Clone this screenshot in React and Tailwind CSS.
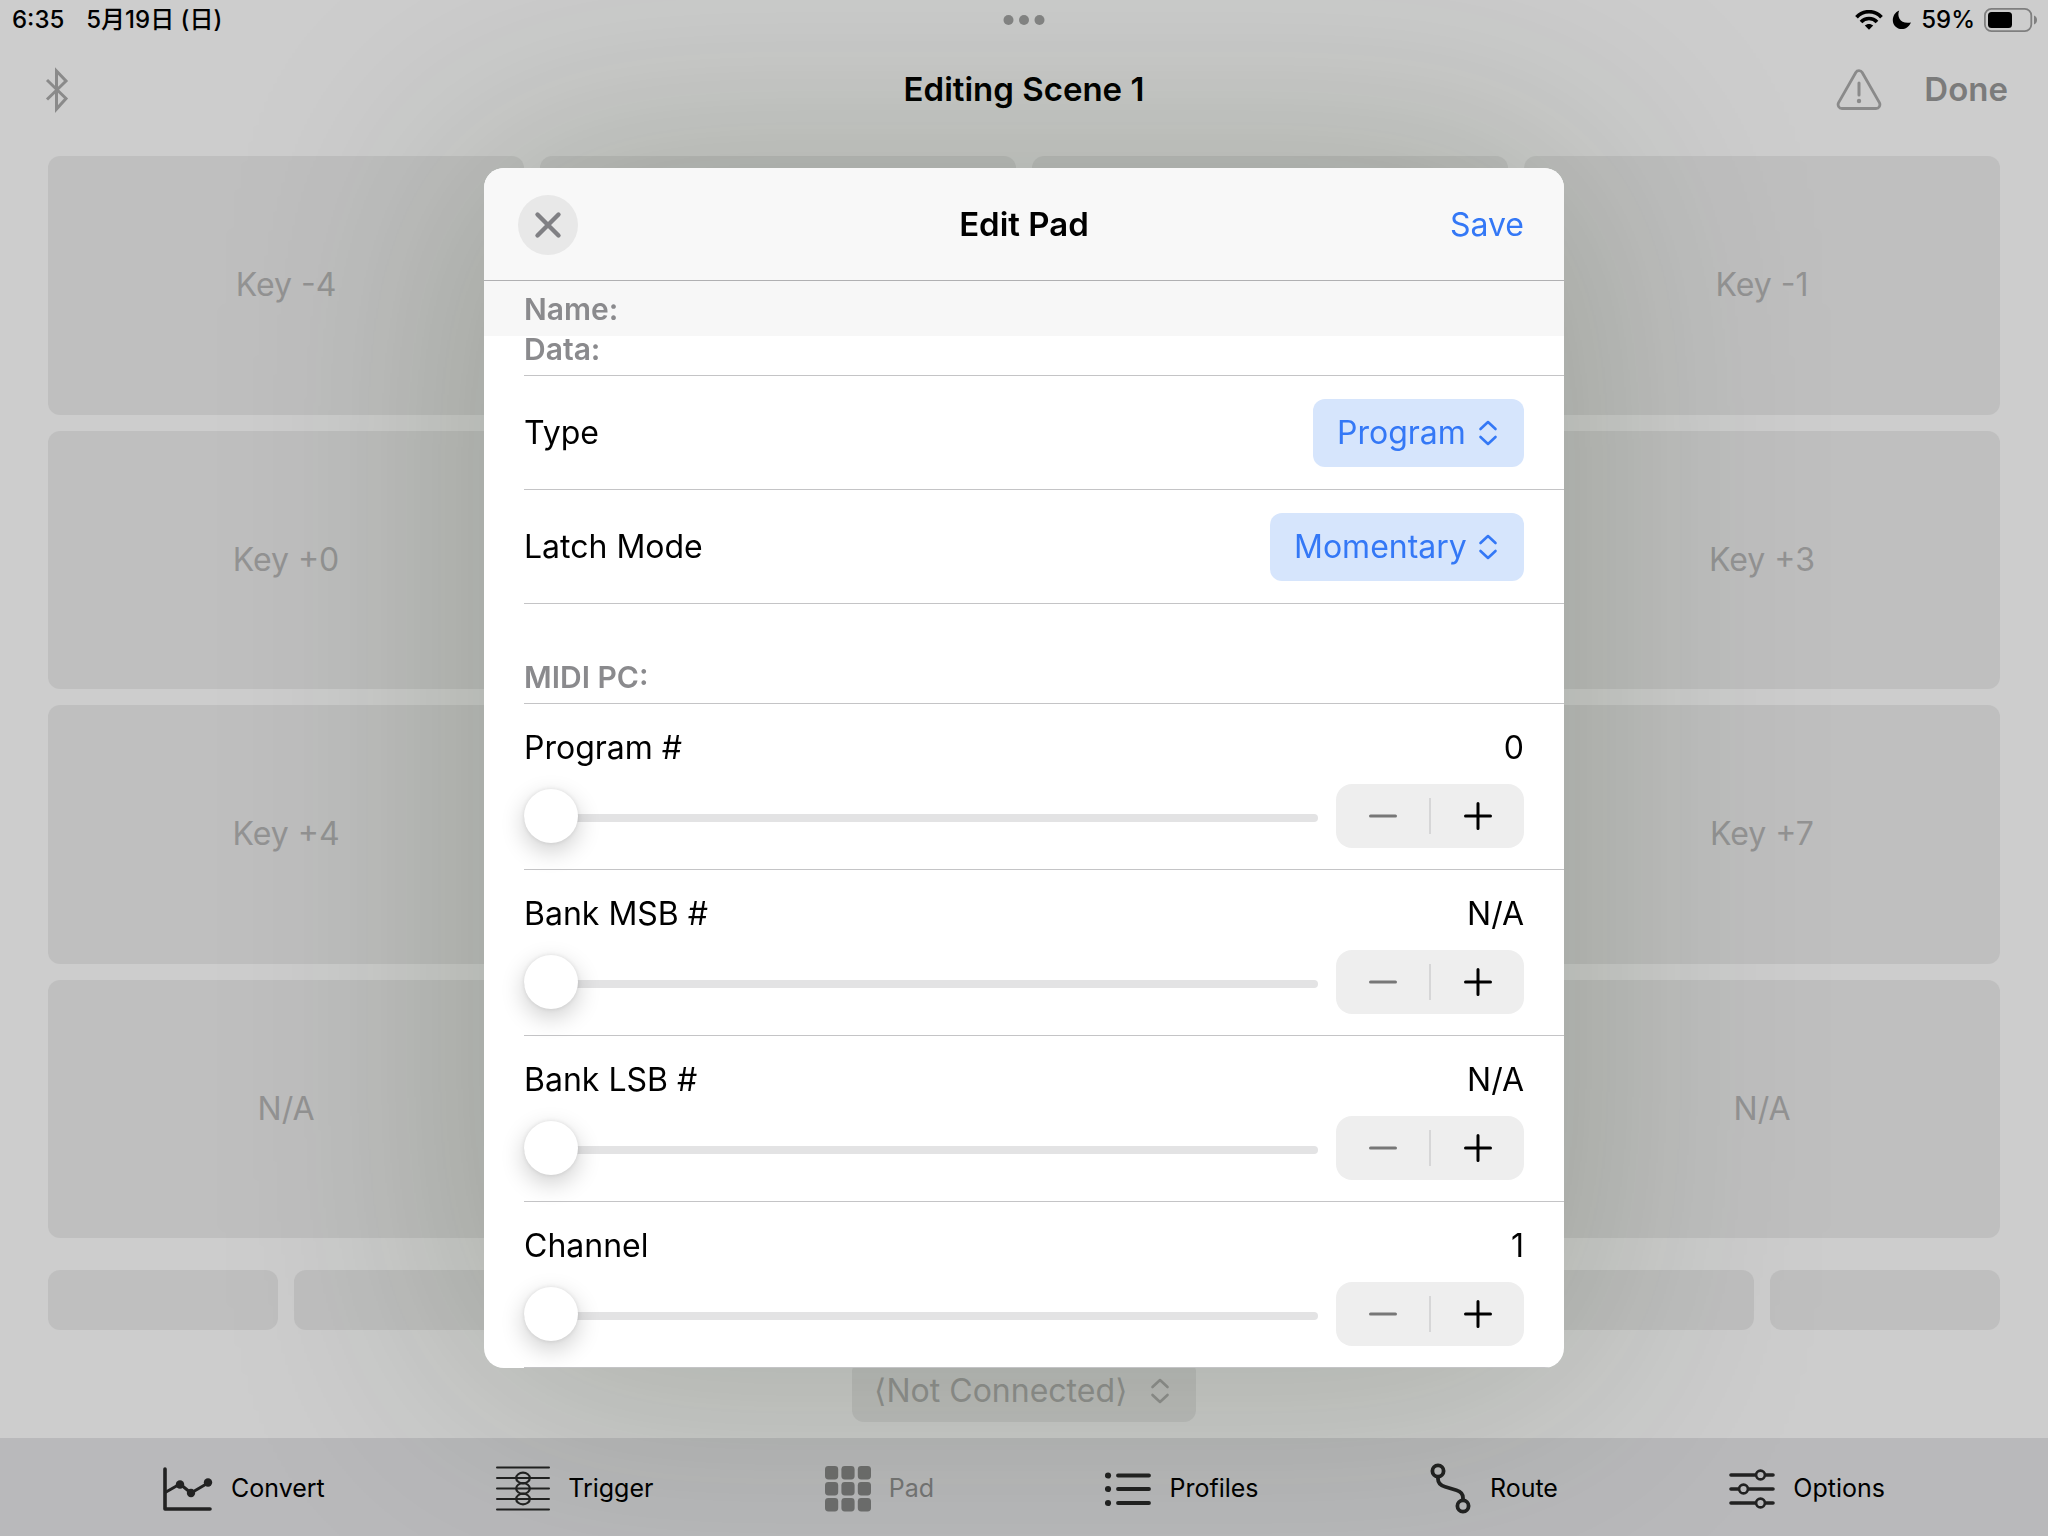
import React, { useState } from "react";

const padNames = [
  "Key -4", "", "", "Key -1",
  "Key +0", "", "", "Key +3",
  "Key +4", "", "", "Key +7",
  "N/A", "", "", "N/A",
];

const UpDown = () => (
  <svg className="pointer-events-none h-7 w-5 shrink-0" viewBox="0 0 20 28" fill="none" stroke="currentColor" strokeWidth="2.6" strokeLinecap="round" strokeLinejoin="round">
    <path d="M2.5 10 L10 3 L17.5 10 M2.5 18 L10 25 L17.5 18" />
  </svg>
);

const StatusBar = () => (
  <div className="grid h-10 grid-cols-3 items-center px-[10px] text-2xl font-medium text-black">
    <div className="flex gap-[22px] pl-0.5">
      <span>6:35</span>
      <span>5月19日 (日)</span>
    </div>
    <svg className="h-3 w-[42px] justify-self-center" viewBox="0 0 42 12" fill="#858585">
      <circle cx="5.5" cy="6" r="5" />
      <circle cx="21" cy="6" r="5" />
      <circle cx="36.5" cy="6" r="5" />
    </svg>
    <div className="flex items-center justify-self-end gap-[9px]">
      <svg className="h-5 w-7" viewBox="0 0 28 20" fill="none" stroke="#000" strokeWidth="3.6">
        <path d="M1.5 7.2 C8 -0.2 20 -0.2 26.5 7.2" />
        <path d="M6 12 C10.2 7.4 17.8 7.4 22 12" />
        <path d="M14 19.8 L9.8 15.6 C12 13.5 16 13.5 18.2 15.6 Z" fill="#000" stroke="none" />
      </svg>
      <svg className="h-5 w-5" viewBox="0 0 20 20">
        <path d="M7.2 0.4 C4.5 6.5 8.5 14.6 19 12.4 C16.8 17 13.6 19 9.8 19 C4.8 19 0.8 15.2 0.8 10.2 C0.8 5.8 3.2 2 7.2 0.4 Z" />
      </svg>
      <span>59%</span>
      <svg className="h-6 w-[54px]" viewBox="0 0 54 24">
        <rect x="0.9" y="0.9" width="46.4" height="22.2" rx="6.5" fill="none" stroke="#7f7f7f" strokeWidth="1.8" />
        <rect x="4" y="4" width="24" height="16" rx="3.5" />
        <path d="M50 7.5 C54 9 54 15 50 16.5 Z" fill="#7f7f7f" />
      </svg>
    </div>
  </div>
);

const Header = () => (
  <header className="grid h-[100px] grid-cols-3 items-center px-10 text-[33px] font-semibold">
    <button aria-label="Bluetooth" className="justify-self-start pl-1">
      <svg className="h-12 w-7" viewBox="0 0 28 48" fill="none" stroke="#8a8a8a" strokeWidth="3">
        <path d="M3 14 L22 32.5 L12.5 43 V5 L22 15 L3 33.5" />
      </svg>
    </button>
    <h1 className="whitespace-nowrap justify-self-center">Editing Scene 1</h1>
    <div className="flex items-center gap-[42px] justify-self-end text-[#7b7b7b]">
      <button aria-label="Warnings">
        <svg className="h-[42px] w-[46px]" viewBox="0 0 46 42" fill="none" stroke="#8a8a8a" strokeWidth="2.8" strokeLinecap="round">
          <path d="M19.8 3.5 L2.6 33.6 C1.2 36.4 3 39.5 6 39.5 H40 C43 39.5 44.8 36.4 43.4 33.6 L26.2 3.5 C24.8 1.1 21.2 1.1 19.8 3.5 Z" />
          <path d="M23 14 V26" strokeWidth="3" />
          <circle cx="23" cy="32" r="2.2" fill="#8a8a8a" stroke="none" />
        </svg>
      </button>
      <button>Done</button>
    </div>
  </header>
);

const ConvertIcon = () => (
  <svg className="h-[54px] w-[50px]" viewBox="0 0 50 54" fill="none" stroke="#222" strokeWidth="3.6" strokeLinecap="round" strokeLinejoin="round">
    <path d="M2 7 V47 H47" />
    <path d="M3 30 L17 22 L28 31 L45 21" strokeWidth="3" />
    <g fill="#222" stroke="none">
      <circle cx="17" cy="22.5" r="4.2" />
      <circle cx="28" cy="31" r="4.2" />
      <circle cx="45" cy="20.5" r="4.2" />
    </g>
  </svg>
);

const TriggerIcon = () => (
  <svg className="h-[54px] w-[54px]" viewBox="0 0 54 54" fill="none" stroke="#222" strokeWidth="2" strokeLinecap="round">
    <path d="M1 5.5 H53 M1 16 H53 M1 26.5 H53 M1 37 H53 M1 47.5 H53" />
    <ellipse cx="27" cy="16" rx="6.8" ry="5.3" strokeWidth="2.2" />
    <ellipse cx="27" cy="26.5" rx="6.8" ry="5.3" strokeWidth="2.2" />
    <ellipse cx="27" cy="37" rx="6.8" ry="5.3" strokeWidth="2.2" />
  </svg>
);

const PadIcon = () => (
  <svg className="h-[54px] w-[46px]" viewBox="0 0 46 54" fill="#6e6e6e">
    {[4, 20, 36].map((y) =>
      [0, 16.4, 32.8].map((x) => (
        <rect key={`${x}-${y}`} x={x} y={y} width="13.2" height="13.4" rx="3.4" />
      ))
    )}
  </svg>
);

const ProfilesIcon = () => (
  <svg className="h-[54px] w-[46px]" viewBox="0 0 46 54" fill="#222" stroke="#222" strokeWidth="3.8" strokeLinecap="round">
    <path d="M13 13.5 H44 M13 27 H44 M13 41 H44" />
    <g stroke="none">
      <circle cx="3" cy="13.5" r="3.1" />
      <circle cx="3" cy="27" r="3.1" />
      <circle cx="3" cy="41" r="3.1" />
    </g>
  </svg>
);

const RouteIcon = () => (
  <svg className="h-[54px] w-[42px]" viewBox="0 0 42 54" fill="none" stroke="#222" strokeWidth="3.8">
    <circle cx="8" cy="9" r="5.6" />
    <circle cx="33" cy="44" r="5.6" />
    <path d="M8 15 V17 C8 21 11 23.5 15 24.8 L26.5 28.3 C30.5 29.5 33 32 33 36 V38" />
  </svg>
);

const OptionsIcon = () => (
  <svg className="h-[54px] w-[46px]" viewBox="0 0 46 54" fill="none" stroke="#222" strokeWidth="3.6" strokeLinecap="round">
    <path d="M2 13 H26 M37 13 H44 M2 27 H9 M20 27 H44 M2 41 H26 M37 41 H44" />
    <g strokeWidth="2.6">
      <circle cx="31.5" cy="13" r="4.4" />
      <circle cx="14.5" cy="27" r="4.4" />
      <circle cx="31.5" cy="41" r="4.4" />
    </g>
  </svg>
);

const tabs = [
  { label: "Convert", Icon: ConvertIcon },
  { label: "Trigger", Icon: TriggerIcon },
  { label: "Pad", Icon: PadIcon, active: true },
  { label: "Profiles", Icon: ProfilesIcon },
  { label: "Route", Icon: RouteIcon },
  { label: "Options", Icon: OptionsIcon },
];

const TabBar = () => (
  <nav className="flex h-[98px] items-center justify-between bg-[#b9b9bb] px-[163px] pt-1 text-[25px]">
    {tabs.map(({ label, Icon, active }) => (
      <button
        key={label}
        className={active ? "flex items-center gap-[18px] text-[#757575]" : "flex items-center gap-[18px] text-black"}
      >
        <Icon />
        {label}
      </button>
    ))}
  </nav>
);

const SelectRow = ({ id, label, options, width }) => (
  <div className="flex h-[114px] items-center justify-between border-b border-[#c4c4c6] pr-10">
    <label htmlFor={id}>{label}</label>
    <div className={`${width} flex h-[68px] items-center rounded-xl bg-[#d6e5fc] pl-6 pr-[26px] text-[#3478f6]`}>
      <select id={id} className="min-w-0 flex-1 appearance-none bg-transparent outline-none">
        {options.map((o) => (
          <option key={o}>{o}</option>
        ))}
      </select>
      <UpDown />
    </div>
  </div>
);

const SliderRow = ({ id, label, min, max, format }) => {
  const [value, setValue] = useState(min);

  return (
    <div className="flex h-[166px] flex-col border-b border-[#c4c4c6] pr-10 pt-5">
      <div className="flex h-12 items-center justify-between">
        <label htmlFor={id}>{label}</label>
        <output htmlFor={id}>{format ? format(value) : value}</output>
      </div>
      <div className="mt-3 flex items-center gap-[18px]">
        <input
          id={id}
          type="range"
          min={min}
          max={max}
          value={value}
          onChange={(e) => setValue(Number(e.target.value))}
          className="mt-1 h-2 min-w-0 flex-1 appearance-none rounded-full bg-[#e3e3e4] outline-none [&::-webkit-slider-thumb]:size-[54px] [&::-webkit-slider-thumb]:-translate-y-0.5 [&::-webkit-slider-thumb]:appearance-none [&::-webkit-slider-thumb]:rounded-full [&::-webkit-slider-thumb]:bg-white [&::-webkit-slider-thumb]:shadow-[0_8px_24px_rgba(0,0,0,0.2),0_0_4px_rgba(0,0,0,0.1)]"
        />
        <div className="flex h-16 w-[188px] items-center rounded-2xl bg-[#eeeeee]">
          <button
            aria-label={`Decrease ${label}`}
            disabled={value <= min}
            onClick={() => setValue(value - 1)}
            className="flex h-full flex-1 items-center justify-center text-black disabled:text-[#777]"
          >
            <svg className="size-7" viewBox="0 0 28 28" stroke="currentColor" strokeWidth="3" strokeLinecap="round">
              <path d="M1.5 14 H26.5" />
            </svg>
          </button>
          <span className="h-9 w-0.5 bg-[#d6d6d7]" />
          <button
            aria-label={`Increase ${label}`}
            disabled={value >= max}
            onClick={() => setValue(value + 1)}
            className="flex h-full flex-1 items-center justify-center text-black disabled:text-[#777]"
          >
            <svg className="size-7" viewBox="0 0 28 28" stroke="currentColor" strokeWidth="3" strokeLinecap="round">
              <path d="M1.5 14 H26.5 M14 1.5 V26.5" />
            </svg>
          </button>
        </div>
      </div>
    </div>
  );
};

const bankFormat = (v) => (v === 0 ? "N/A" : v - 1);

const EditPadDialog = () => (
  <div
    role="dialog"
    aria-labelledby="dialog-title"
    className="w-full max-w-[1080px] rounded-[20px] bg-white shadow-[0_0_280px_10px_rgba(24,44,8,0.22)]"
  >
    <div className="overflow-hidden rounded-[20px]">
      <div className="grid h-[113px] grid-cols-3 items-center border-b border-[#b0b0b2] bg-[#f8f8f8] px-[34px] pt-0.5 text-[32px]">
        <button aria-label="Close" className="flex size-[60px] items-center justify-center rounded-full bg-[#e8e8e8]">
          <svg className="size-7" viewBox="0 0 28 28" stroke="#808084" strokeWidth="4.4" strokeLinecap="round">
            <path d="M3.5 3.5 L24.5 24.5 M24.5 3.5 L3.5 24.5" />
          </svg>
        </button>
        <h2 id="dialog-title" className="justify-self-center text-[33px] font-semibold">Edit Pad</h2>
        <button className="justify-self-end pr-1.5 text-[#3478f6]">Save</button>
      </div>
      <h3 className="flex h-[55px] items-center bg-[#f7f7f7] pl-10 text-3xl font-semibold text-[#8a8a8d]">Name:</h3>
      <div className="pl-10 text-[32px]">
        <h3 className="flex h-10 items-start border-b border-[#c4c4c6] text-3xl leading-[26px] font-semibold text-[#8a8a8d]">Data:</h3>
        <SelectRow id="type" label="Type" options={["Program", "Note", "Control"]} width="w-[211px]" />
        <SelectRow id="latch" label="Latch Mode" options={["Momentary", "Toggle"]} width="w-[254px]" />
        <h3 className="flex h-[100px] items-end border-b border-[#c4c4c6] pb-2 text-3xl font-semibold text-[#8a8a8d]">MIDI PC:</h3>
        <SliderRow id="program" label="Program #" min={0} max={127} />
        <SliderRow id="msb" label="Bank MSB #" min={0} max={128} format={bankFormat} />
        <SliderRow id="lsb" label="Bank LSB #" min={0} max={128} format={bankFormat} />
        <SliderRow id="channel" label="Channel" min={1} max={16} />
      </div>
    </div>
  </div>
);

const App = () => {
  return (
    <div className="flex min-h-screen flex-col bg-[#cdcdcd] font-[Inter,'Noto_Sans_CJK_JP','DejaVu_Sans',sans-serif]">
      <StatusBar />
      <Header />

      <main className="flex flex-1 flex-col px-12 pb-4 pt-4">
        <div className="grid flex-1 grid-cols-4 grid-rows-4 gap-4 text-[32px] text-[#939393]">
          {padNames.map((name, i) => (
            <button key={i} aria-label={name || `Pad ${i + 1}`} className="rounded-xl bg-[#bfbfbf]">
              {name}
            </button>
          ))}
        </div>
        <div className="mt-8 grid grid-cols-8 gap-4">
          {[1, 2, 3, 4, 5, 6, 7, 8].map((n) => (
            <button key={n} aria-label={`Scene ${n}`} className="h-[60px] rounded-xl bg-[#bfbfbf]" />
          ))}
        </div>
        <div className="mt-[30px] flex h-[62px] w-[344px] items-center self-center rounded-xl bg-[#bfbfbf] pl-[22px] pr-[26px] text-[32px] text-[#929292]">
          <select aria-label="MIDI device" className="min-w-0 flex-1 appearance-none bg-transparent outline-none">
            <option>⟨Not Connected⟩</option>
          </select>
          <UpDown />
        </div>
      </main>

      <TabBar />

      {/* Modal */}
      <div className="fixed inset-0 flex items-center justify-center">
        <EditPadDialog />
      </div>
    </div>
  );
};

export default App;
